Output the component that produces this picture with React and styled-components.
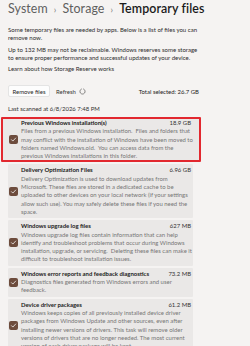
import React from "react";
import styled, { createGlobalStyle } from "styled-components";

const GlobalStyle = createGlobalStyle`
  html, body {
    margin: 0;
    padding: 0;
    background: #f5f3f2;
  }
  body {
    font-family: "Segoe UI", Lato, "Noto Sans", sans-serif;
    color: #1b1b1b;
    -webkit-font-smoothing: antialiased;
  }
`;

const items = [
  {
    title: "Previous Windows installation(s)",
    size: "18.9 GB",
    lines: [
      "Files from a previous Windows installation.  Files and folders that",
      "may conflict with the installation of Windows have been moved to",
      "folders named Windows.old.  You can access data from the",
      "previous Windows installations in this folder.",
    ],
    highlight: true,
  },
  {
    title: "Delivery Optimization Files",
    size: "6.96 GB",
    lines: [
      "Delivery Optimization is used to download updates from",
      "Microsoft. These files are stored in a dedicated cache to be",
      "uploaded to other devices on your local network (if your settings",
      "allow such use). You may safely delete these files if you need the",
      "space.",
    ],
  },
  {
    title: "Windows upgrade log files",
    size: "627 MB",
    lines: [
      "Windows upgrade log files contain information that can help",
      "identify and troubleshoot problems that occur during Windows",
      "installation, upgrade, or servicing.  Deleting these files can make it",
      "difficult to troubleshoot installation issues.",
    ],
  },
  {
    title: "Windows error reports and feedback diagnostics",
    size: "73.2 MB",
    lines: [
      "Diagnostics files generated from Windows errors and user",
      "feedback.",
    ],
  },
  {
    title: "Device driver packages",
    size: "61.2 MB",
    lines: [
      "Windows keeps copies of all previously installed device driver",
      "packages from Windows Update and other sources, even after",
      "installing newer versions of drivers. This task will remove older",
      "versions of drivers that are no longer needed. The most current",
      "version of each driver package will be kept.",
    ],
  },
];

export default function App() {
  return (
    <>
      <GlobalStyle />
      <Page>
        <Breadcrumb>
          <span>System</span>
          <Chevron>›</Chevron>
          <span>Storage</span>
          <Chevron>›</Chevron>
          <Current>Temporary files</Current>
        </Breadcrumb>

        <Para>
          <Line>Some temporary files are needed by apps. Below is a list of files you can</Line>
          <Line>remove now.</Line>
        </Para>
        <Para>
          <Line>Up to 132 MB may not be reclaimable. Windows reserves some storage</Line>
          <Line>to ensure proper performance and successful updates of your device.</Line>
        </Para>
        <Link>Learn about how Storage Reserve works</Link>

        <Toolbar>
          <Button>Remove files</Button>
          <Refresh>
            Refresh
            <svg width="7" height="7" viewBox="0 0 16 16">
              <path
                d="M10.5 2.3A6 6 0 1 1 5.5 2.3"
                fill="none"
                stroke="#444"
                strokeWidth="1.4"
                strokeLinecap="round"
              />
            </svg>
          </Refresh>
          <Total>Total selected: 26.7 GB</Total>
        </Toolbar>

        <Scanned>Last scanned at 6/8/2026 7:48 PM</Scanned>

        <List>
          {items.map((item) => (
            <Card key={item.title} $highlight={item.highlight}>
              <Check>
                <svg width="7" height="7" viewBox="0 0 12 12">
                  <path
                    d="M2.5 6.3l2.4 2.4 4.8-5.2"
                    fill="none"
                    stroke="#fff"
                    strokeWidth="1.3"
                    strokeLinecap="round"
                    strokeLinejoin="round"
                  />
                </svg>
              </Check>
              <Body>
                <TitleRow>
                  <Title>{item.title}</Title>
                  <Size>{item.size}</Size>
                </TitleRow>
                <Desc>
                  {item.lines.map((l) => (
                    <Line key={l}>{l}</Line>
                  ))}
                </Desc>
              </Body>
            </Card>
          ))}
        </List>
      </Page>
    </>
  );
}

const Page = styled.div`
  width: 250px;
  height: 346px;
  overflow: hidden;
  box-sizing: border-box;
  padding: 0 8px;
`;

const Breadcrumb = styled.h1`
  display: flex;
  align-items: baseline;
  gap: 6px;
  margin: 0;
  padding-top: 1px;
  height: 17px;
  font-size: 12.4px;
  font-weight: 400;
  color: #5f5f5f;
  letter-spacing: 0.1px;
`;

const Chevron = styled.span`
  font-size: 9px;
  color: #7a7a7a;
`;

const Current = styled.span`
  color: #1a1a1a;
  font-weight: 600;
`;

const Line = styled.div`
  white-space: pre;
`;

const Para = styled.div`
  margin: 8px 0 0;
  font-size: 6.05px;
  line-height: 8.3px;
  color: #2e2e2e;
  & + & {
    margin-top: 3px;
  }
`;

const Link = styled.div`
  margin-top: 3px;
  font-size: 6.05px;
  line-height: 8px;
  color: #2e2e2e;
`;

const Toolbar = styled.div`
  display: flex;
  align-items: center;
  margin-top: 11.8px;
  height: 12.5px;
  font-size: 5.95px;
`;

const Button = styled.div`
  display: flex;
  align-items: center;
  justify-content: center;
  width: 42px;
  height: 12.5px;
  background: #fdfdfd;
  border: 0.5px solid #e4e4e4;
  box-sizing: border-box;
  border-radius: 2px;
  color: #1f1f1f;
`;

const Refresh = styled.div`
  display: flex;
  align-items: center;
  gap: 3px;
  margin-left: 6px;
  color: #333;
  svg {
    display: block;
  }
`;

const Total = styled.div`
  margin-left: 53px;
  color: #222;
`;

const Scanned = styled.div`
  margin-top: 7.5px;
  font-size: 5.95px;
  line-height: 8px;
  color: #333;
`;

const List = styled.div`
  display: flex;
  flex-direction: column;
  gap: 2px;
  width: 185px;
  margin-top: 4px;
`;

const Card = styled.div`
  display: flex;
  align-items: center;
  gap: 2px;
  background: #eae8e7;
  border-radius: 1px;
  padding: ${(p) => (p.$highlight ? "0 8px 0 6px" : "2px 2px 2px 1px")};
  margin: ${(p) => (p.$highlight ? "0 -8px 0 -7px" : "0")};
  border: ${(p) => (p.$highlight ? "2px solid #e2282f" : "none")};
`;

const Check = styled.div`
  flex: none;
  display: flex;
  align-items: center;
  justify-content: center;
  width: 9px;
  height: 9px;
  border-radius: 2px;
  background: #6d4c3d;
`;

const Body = styled.div`
  flex: 1;
  min-width: 0;
  padding-left: 1px;
`;

const TitleRow = styled.div`
  display: flex;
  justify-content: space-between;
  align-items: baseline;
  font-size: 5.95px;
  line-height: 8.3px;
`;

const Title = styled.span`
  font-weight: 700;
  color: #1a1a1a;
`;

const Size = styled.span`
  color: #333;
`;

const Desc = styled.div`
  font-size: 5.95px;
  line-height: 8.3px;
  color: #767676;
`;
